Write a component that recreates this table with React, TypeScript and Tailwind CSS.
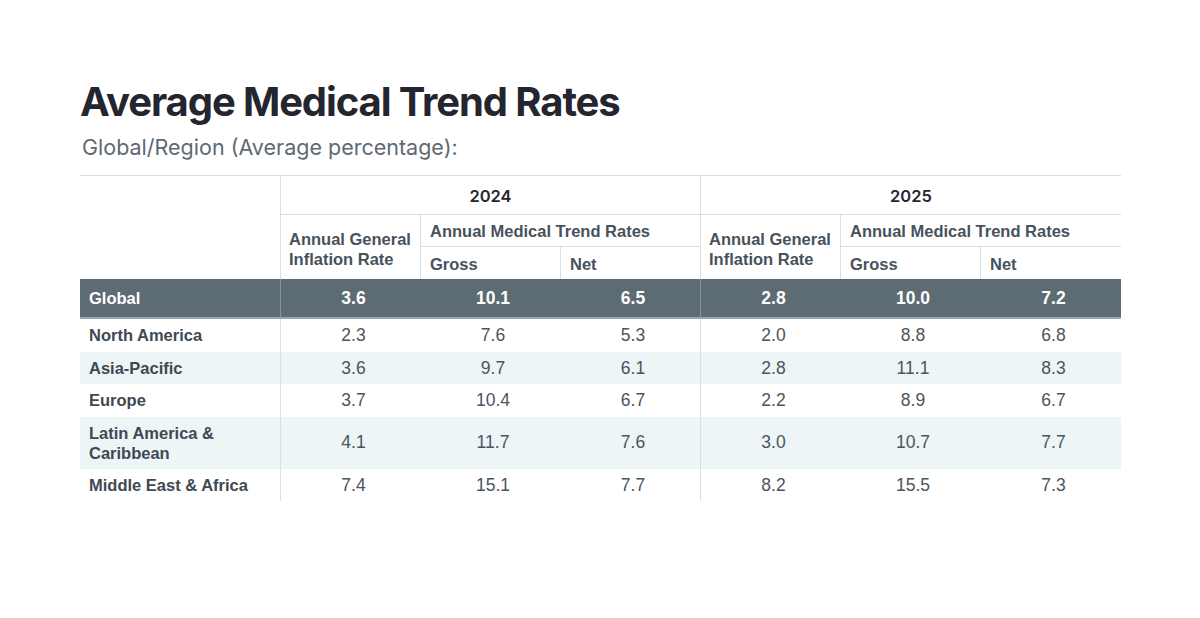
import React from "react";

const cols = "grid grid-cols-[200px_140px_140px_140px_140px_140px_141px]";
const bd = "border-[#d5e2e4]";

type Row = { label: React.ReactNode; v: string[]; tall?: boolean };

const rows: Row[] = [
  { label: "North America", v: ["2.3", "7.6", "5.3", "2.0", "8.8", "6.8"] },
  { label: "Asia-Pacific", v: ["3.6", "9.7", "6.1", "2.8", "11.1", "8.3"] },
  { label: "Europe", v: ["3.7", "10.4", "6.7", "2.2", "8.9", "6.7"] },
  {
    label: (
      <>
        Latin America &amp;
        <br />
        Caribbean
      </>
    ),
    v: ["4.1", "11.7", "7.6", "3.0", "10.7", "7.7"],
    tall: true,
  },
  { label: "Middle East & Africa", v: ["7.4", "15.1", "7.7", "8.2", "15.5", "7.3"] },
];

const hdr = "font-['Liberation_Sans',Arial,sans-serif] font-bold text-[16.5px] leading-[20px] text-[#47525c]";

export default function App() {
  return (
    <div className="w-[1200px] h-[618px] bg-white pl-[80px] pt-[78px]">
      <h1 className="font-['Inter',sans-serif] font-bold text-[40px] leading-[48px] tracking-[-1.1px] text-[#25252f]">
        Average Medical Trend Rates
      </h1>
      <p className="mt-[9px] ml-[2px] font-['Inter',sans-serif] text-[21.5px] leading-[24px] text-[#5e6973]">
        Global/Region (Average percentage):
      </p>
      <div className={`mt-[16px] w-[1041px] border-t ${bd}`}>
        {/* header */}
        <div className={`${cols} grid-rows-[39px_32px_32px]`}>
          <div className="col-start-1 row-start-1 row-span-3" />
          <div className={`col-start-2 col-span-3 row-start-1 border-l border-b ${bd} flex items-center justify-center pt-[2px] font-['Inter',sans-serif] font-semibold text-[16.5px] text-[#262631]`}>
            2024
          </div>
          <div className={`col-start-5 col-span-3 row-start-1 border-l border-b ${bd} flex items-center justify-center pt-[2px] font-['Inter',sans-serif] font-semibold text-[16.5px] text-[#262631]`}>
            2025
          </div>
          {[2, 5].map((c) => (
            <React.Fragment key={c}>
              <div
                className={`${c === 2 ? "col-start-2" : "col-start-5"} row-start-2 row-span-2 border-l ${bd} flex flex-col justify-center pl-[8px] pt-[4px] ${hdr}`}
              >
                <span>Annual General</span>
                <span>Inflation Rate</span>
              </div>
              <div
                className={`${c === 2 ? "col-start-3" : "col-start-6"} col-span-2 row-start-2 border-l border-b ${bd} flex items-center pl-[9px] ${hdr}`}
              >
                Annual Medical Trend Rates
              </div>
              <div
                className={`${c === 2 ? "col-start-3" : "col-start-6"} row-start-3 border-l ${bd} flex items-center pl-[9px] pt-[2px] ${hdr}`}
              >
                Gross
              </div>
              <div
                className={`${c === 2 ? "col-start-4" : "col-start-7"} row-start-3 border-l ${bd} flex items-center pl-[9px] pt-[2px] ${hdr}`}
              >
                Net
              </div>
            </React.Fragment>
          ))}
        </div>
        {/* global row */}
        <div className={`${cols} h-[40px] bg-[#5d6b75] border-b-2 border-[#9aa6ad] text-white font-['Liberation_Sans',Arial,sans-serif] font-bold`}>
          <div className="flex items-center pl-[9px] text-[16.5px]">Global</div>
          {["3.6", "10.1", "6.5", "2.8", "10.0", "7.2"].map((v, i) => (
            <div
              key={i}
              className={`flex items-center justify-center pl-[6px] text-[17.5px] ${i === 0 || i === 3 ? "border-l border-[#85939b]" : ""}`}
            >
              {v}
            </div>
          ))}
        </div>
        {/* body */}
        {rows.map((r, ri) => (
          <div
            key={ri}
            className={`${cols} ${r.tall ? "h-[52px]" : "h-[32.5px]"} ${ri % 2 === 1 ? "bg-[#edf5f7]" : "bg-white"}`}
          >
            <div className="flex items-center pl-[9px] font-['Liberation_Sans',Arial,sans-serif] font-bold text-[16.5px] leading-[20px] text-[#3f4953]">
              <span>{r.label}</span>
            </div>
            {r.v.map((v, i) => (
              <div
                key={i}
                className={`flex items-center justify-center pl-[6px] font-['Liberation_Sans',Arial,sans-serif] text-[17.5px] text-[#4a545e] ${i === 0 || i === 3 ? `border-l ${bd}` : ""}`}
              >
                {v}
              </div>
            ))}
          </div>
        ))}
      </div>
    </div>
  );
}
